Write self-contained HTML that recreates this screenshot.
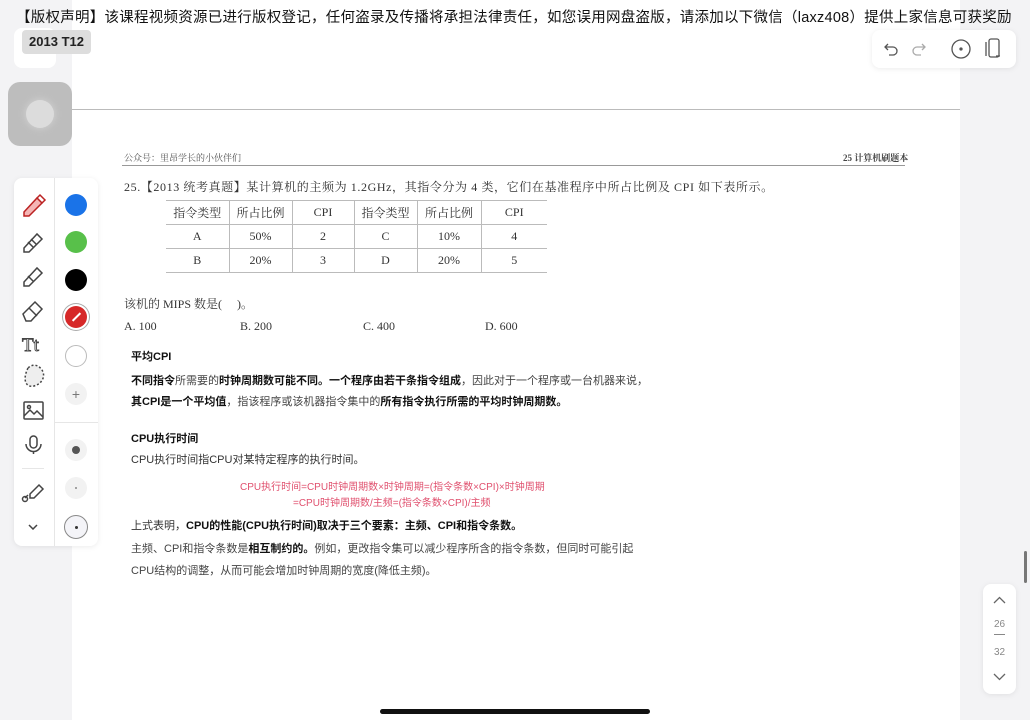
<!DOCTYPE html>
<html><head><meta charset="utf-8"><style>
*{margin:0;padding:0;box-sizing:border-box}
body{width:1030px;height:720px;overflow:hidden;background:#f3f3f5;position:relative;font-family:"Liberation Sans","Noto Sans CJK SC",sans-serif}
.abs{position:absolute}
.page{left:72px;top:0;width:888px;height:720px;background:#fff}
.serif{font-family:"Liberation Serif","Noto Serif CJK SC",serif}
table{border-collapse:collapse;position:absolute;left:166px;top:200px;font-family:"Liberation Serif","Noto Serif CJK SC",serif;font-size:12px;color:#333}
td{border-left:1px solid #bbb;border-top:1px solid #bbb;border-bottom:1px solid #bbb;text-align:center;height:24px}
td:first-child{border-left:none}
.t{font-size:12px;color:#333;white-space:nowrap}
.b{font-weight:bold;color:#111}
.dot{position:absolute;left:65px;width:22px;height:22px;border-radius:50%}
</style></head><body>
<div class="abs page"></div>
<div class="abs" style="left:72px;top:109px;width:888px;height:1px;background:#bbb"></div>
<div class="abs" style="left:16px;top:6px;font-size:14.5px;color:#111;white-space:nowrap;letter-spacing:0.25px">【版权声明】该课程视频资源已进行版权登记，任何盗录及传播将承担法律责任，如您误用网盘盗版，请添加以下微信（laxz408）提供上家信息可获奖励</div>
<div class="abs" style="left:14px;top:28px;width:42px;height:40px;background:#fff;border-radius:8px"></div>
<div class="abs" style="left:22px;top:30px;width:69px;height:24px;background:#ddd;border-radius:4px;font-size:13px;font-weight:bold;color:#222;line-height:24px;text-align:center">2013 T12</div>
<div class="abs" style="left:8px;top:82px;width:64px;height:64px;background:#bdbdbd;border-radius:12px"><div class="abs" style="left:18px;top:18px;width:28px;height:28px;border-radius:50%;background:#dcdcdc;box-shadow:0 0 8px #d5d5d5"></div></div>
<div class="abs" style="left:14px;top:178px;width:84px;height:368px;background:#fff;border-radius:8px;box-shadow:0 1px 6px rgba(0,0,0,.08)"></div>
<div class="abs" style="left:54px;top:178px;width:1px;height:368px;background:#e6e6e6"></div>
<div class="abs" style="left:55px;top:422px;width:43px;height:1px;background:#e6e6e6"></div>
<div class="abs" style="left:22px;top:468px;width:22px;height:1px;background:#e6e6e6"></div>
<svg class="abs" style="left:20px;top:190px" width="28" height="340" fill="none" stroke="#444" stroke-width="1.5">
<path d="M4 22 L17 8 L22 13 L9 26 L4 26Z" fill="#f4b5b5" stroke="#b22"/><path d="M17 8 l3-3 5 5-3 3" stroke="#b22"/>
<path d="M4 58 L17 44 L22 49 L9 62 L4 62Z M8 52 l6 6 M11 49 l6 6"/>
<path d="M4 92 L17 78 L22 83 L9 96 L4 96Z M8 86 l6 6"/>
<path d="M3 124 L15 112 L22 119 L11 131 L6 131Z M9 118 l8 8"/>
<text x="2" y="161" font-family="Liberation Serif" font-size="19" fill="none" stroke="#444" stroke-width="0.9">Tt</text>
<path d="M8 178 C2 190 6 198 14 196 C22 194 26 186 22 180 C18 174 12 174 8 178Z" stroke-dasharray="2 2" fill="#eee"/>
<rect x="4" y="212" width="19" height="17" rx="1"/><path d="M4 226 l6-6 4 4 3-3 6 6"/><circle cx="9" cy="217" r="1.5"/>
<rect x="10" y="246" width="7" height="12" rx="3.5"/><path d="M6 254 a7 7 0 0 0 15 0 M13.5 261 v3"/>
<path d="M5 308 l3-3 M10 304 l9-9 4 4-9 9-4 0Z"/><circle cx="5" cy="309" r="2.5"/>
<path d="M9 335 l4 4 4-4"/>
</svg>
<div class="dot" style="top:194px;background:#1a73e8"></div>
<div class="dot" style="top:231px;background:#58c04a"></div>
<div class="dot" style="top:269px;background:#000"></div>
<div class="dot" style="top:306px;background:#d62828;box-shadow:0 0 0 2px #fff,0 0 0 3px #aaa"><div class="abs" style="left:6px;top:10px;width:11px;height:2px;background:#fff;transform:rotate(-45deg)"></div></div>
<div class="dot" style="top:345px;border:1px solid #bbb;background:#fff"></div>
<div class="dot" style="top:383px;background:#f2f2f2;color:#777;font-size:14px;text-align:center;line-height:22px">+</div>
<div class="dot" style="top:439px;background:#f2f2f2"><div class="abs" style="left:7px;top:7px;width:8px;height:8px;border-radius:50%;background:#555"></div></div>
<div class="dot" style="top:477px;background:#f2f2f2"><div class="abs" style="left:10px;top:10px;width:2px;height:2px;border-radius:50%;background:#888"></div></div>
<div class="dot" style="top:515px;width:24px;height:24px;left:64px;border:1px solid #888;background:#f4f4f8"><div class="abs" style="left:9.5px;top:9.5px;width:3px;height:3px;border-radius:50%;background:#333"></div></div>
<div class="abs" style="left:872px;top:30px;width:144px;height:38px;background:#fff;border-radius:8px;box-shadow:0 1px 6px rgba(0,0,0,.08)"></div>
<svg class="abs" style="left:880px;top:36px" width="130" height="26" fill="none" stroke="#555" stroke-width="1.3">
<path d="M8 8 l-3 3 3 3 M5 11 h8 a4 4 0 0 1 0 8 h-4"/>
<path d="M42 8 l3 3-3 3 M45 11 h-8 a4 4 0 0 0 0 8 h4" stroke="#aaa"/>
<circle cx="81" cy="13" r="9"/><circle cx="81" cy="13" r="1" fill="#555"/>
<rect x="109" y="3" width="10" height="18" rx="2"/><path d="M106 6 v14 M120 20 h-4"/>
</svg>
<div class="abs serif" style="left:124px;top:151px;font-size:9px;color:#555">公众号：里昂学长的小伙伴们</div>
<div class="abs serif" style="left:843px;top:151px;font-size:9px;color:#444;font-weight:bold">25 计算机刷题本</div>
<div class="abs" style="left:122px;top:165px;width:783px;height:1px;background:#999"></div>
<div class="abs serif t" style="left:124px;top:178px;letter-spacing:0.6px">25.【2013 统考真题】某计算机的主频为 1.2GHz，其指令分为 4 类，它们在基准程序中所占比例及 CPI 如下表所示。</div>
<table>
<tr><td style="width:63px">指令类型</td><td style="width:63px">所占比例</td><td style="width:62px">CPI</td><td style="width:63px">指令类型</td><td style="width:64px">所占比例</td><td style="width:66px">CPI</td></tr>
<tr><td>A</td><td>50%</td><td>2</td><td>C</td><td>10%</td><td>4</td></tr>
<tr><td>B</td><td>20%</td><td>3</td><td>D</td><td>20%</td><td>5</td></tr>
</table>
<div class="abs serif t" style="left:124px;top:295px">该机的 MIPS 数是(&nbsp;&nbsp;&nbsp;&nbsp;&nbsp;)。</div>
<div class="abs serif t" style="left:124px;top:319px">A. 100</div>
<div class="abs serif t" style="left:240px;top:319px">B. 200</div>
<div class="abs serif t" style="left:363px;top:319px">C. 400</div>
<div class="abs serif t" style="left:485px;top:319px">D. 600</div>
<div class="abs t b" style="left:131px;top:348px;font-size:11px">平均CPI</div>
<div class="abs t" style="left:131px;top:372px;font-size:11px;color:#444"><span class="b">不同指令</span>所需要的<span class="b">时钟周期数可能不同。一个程序由若干条指令组成</span>，因此对于一个程序或一台机器来说，</div>
<div class="abs t" style="left:131px;top:393px;font-size:11px;color:#444"><span class="b">其CPI是一个平均值</span>，指该程序或该机器指令集中的<span class="b">所有指令执行所需的平均时钟周期数。</span></div>
<div class="abs t b" style="left:131px;top:430px;font-size:11px">CPU执行时间</div>
<div class="abs t" style="left:131px;top:451px;font-size:11px;color:#333">CPU执行时间指CPU对某特定程序的执行时间。</div>
<div class="abs t" style="left:240px;top:478px;font-size:10px;color:#e0506e">CPU执行时间=CPU时钟周期数×时钟周期=(指令条数×CPI)×时钟周期</div>
<div class="abs t" style="left:293px;top:494px;font-size:10px;color:#e0506e">=CPU时钟周期数/主频=(指令条数×CPI)/主频</div>
<div class="abs t" style="left:131px;top:517px;font-size:11px;color:#333">上式表明，<span class="b">CPU的性能(CPU执行时间)取决于三个要素：主频、CPI和指令条数。</span></div>
<div class="abs t" style="left:131px;top:540px;font-size:11px;color:#444">主频、CPI和指令条数是<span class="b">相互制约的。</span>例如，更改指令集可以减少程序所含的指令条数，但同时可能引起</div>
<div class="abs t" style="left:131px;top:562px;font-size:11px;color:#444">CPU结构的调整，从而可能会增加时钟周期的宽度(降低主频)。</div>
<div class="abs" style="left:1024px;top:551px;width:3px;height:32px;background:#777;border-radius:2px"></div>
<div class="abs" style="left:983px;top:584px;width:33px;height:110px;background:#fff;border-radius:8px;box-shadow:0 1px 6px rgba(0,0,0,.08);text-align:center;font-size:10px;color:#888">
<svg class="abs" style="left:10px;top:12px" width="13" height="8" fill="none" stroke="#666" stroke-width="1.3"><path d="M1 7 l5.5-5.5 5.5 5.5"/></svg>
<div class="abs" style="left:0;width:33px;top:35px">26</div>
<div class="abs" style="left:11px;top:50px;width:11px;height:1px;background:#888"></div>
<div class="abs" style="left:0;width:33px;top:63px">32</div>
<svg class="abs" style="left:10px;top:89px" width="13" height="8" fill="none" stroke="#666" stroke-width="1.3"><path d="M1 1 l5.5 5.5 5.5-5.5"/></svg>
</div>
<div class="abs" style="left:380px;top:709px;width:270px;height:5px;background:#111;border-radius:3px"></div>
</body></html>
